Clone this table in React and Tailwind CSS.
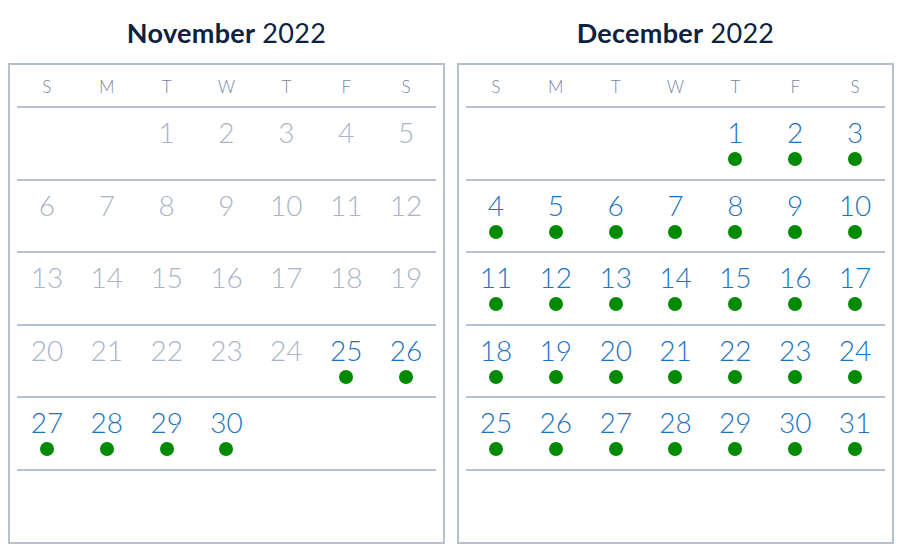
import React from "react";

const DAYS = ["S", "M", "T", "W", "T", "F", "S"];

function buildWeeks(startDow, count, availableFrom) {
  const cells = [];
  for (let i = 0; i < startDow; i++) cells.push(null);
  for (let d = 1; d <= count; d++) cells.push({ d, avail: d >= availableFrom });
  while (cells.length < 35) cells.push(null);
  const weeks = [];
  for (let i = 0; i < 35; i += 7) weeks.push(cells.slice(i, i + 7));
  return weeks;
}

function Month({ name, year, weeks }) {
  return (
    <div className="flex-1 flex flex-col">
      <div className="h-[63px] flex items-center justify-center pt-[4px] text-[27px] text-[#0d2240] tracking-[0.3px]">
        <span className="font-bold">{name}</span>
        <span className="ml-[7px]">{year}</span>
      </div>
      <div className="h-[481px] border-2 border-[#b6c1d0] px-[7px] flex flex-col">
        <div className="h-[43px] shrink-0 border-b-2 border-[#b6c1d0] grid grid-cols-7 items-center text-[17px] font-light text-[#74869f]">
          {DAYS.map((d, i) => (
            <div key={i} className="text-center pt-[3px]">{d}</div>
          ))}
        </div>
        {weeks.map((w, wi) => (
          <div key={wi} className="h-[72.6px] shrink-0 border-b-2 border-[#b6c1d0] grid grid-cols-7">
            {w.map((c, ci) => (
              <div key={ci} className="flex flex-col items-center pt-[8px]">
                {c && (
                  <>
                    <div
                      className={
                        "text-[28px] leading-[32px] font-light " +
                        (c.avail ? "text-[#1e73be]" : "text-[#a8b5c7]")
                      }
                    >
                      {c.d}
                    </div>
                    {c.avail && (
                      <div className="mt-[4px] w-[14px] h-[14px] rounded-full bg-[#008a00]" />
                    )}
                  </>
                )}
              </div>
            ))}
          </div>
        ))}
      </div>
    </div>
  );
}

export default function App() {
  const nov = buildWeeks(2, 30, 25);
  const dec = buildWeeks(4, 31, 1);
  return (
    <div
      className="w-[900px] h-[558px] bg-white flex gap-[12px] pl-[8px] pr-[6px]"
      style={{ fontFamily: "Lato, 'Noto Sans', sans-serif" }}
    >
      <Month name="November" year="2022" weeks={nov} />
      <Month name="December" year="2022" weeks={dec} />
    </div>
  );
}
